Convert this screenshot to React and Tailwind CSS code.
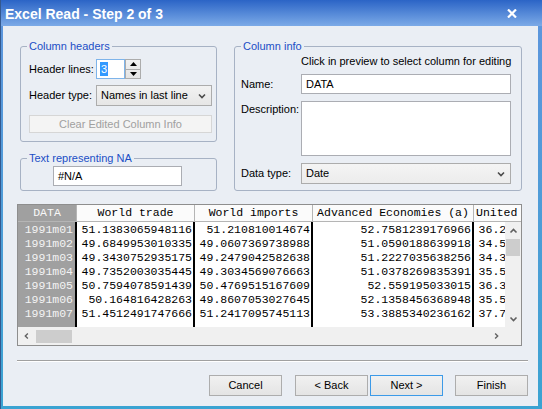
import React from "react";

const rows = [
  ["1991m01", "51.1383065948116", "51.210810014674", "52.7581239176966", "36.2146873021595"],
  ["1991m02", "49.6849953010335", "49.0607369738988", "51.0590188639918", "34.5912036618744"],
  ["1991m03", "49.3430752935175", "49.2479042582638", "51.2227035638256", "34.3307118430962"],
  ["1991m04", "49.7352003035445", "49.3034569076663", "51.0378269835391", "35.5146720913508"],
  ["1991m05", "50.7594078591439", "50.4769515167609", "52.559195033015", "36.3021845591173"],
  ["1991m06", "50.164816428263", "49.8607053027645", "52.1358456368948", "35.5887402716330"],
  ["1991m07", "51.4512491747666", "51.2417095745113", "53.3885340236162", "37.7165029384417"],
];

const columns = [
  { title: "World trade", width: "w-[118px]", align: "text-center" },
  { title: "World imports", width: "w-[118px]", align: "text-center" },
  { title: "Advanced Economies (a)", width: "w-[161px]", align: "text-center" },
  { title: "United States", width: "w-[118px]", align: "text-left pl-[2px]" },
];

function Chevron({ dir = "down", className = "" }) {
  const paths = {
    down: "M1 1.5 L4 4.5 L7 1.5",
    up: "M1 4.5 L4 1.5 L7 4.5",
    left: "M4.5 1 L1.5 4 L4.5 7",
    right: "M2.5 1 L5.5 4 L2.5 7",
  };
  const box = dir === "up" || dir === "down" ? "0 0 8 6" : "0 0 7 8";
  return (
    <svg
      viewBox={box}
      className={className}
      fill="none"
      stroke="currentColor"
      strokeWidth="1.6"
    >
      <path d={paths[dir]} />
    </svg>
  );
}

function Select({ value, className = "" }) {
  return (
    <div
      className={`flex items-center justify-between h-[21px] pl-[4px] pr-[5px] border border-[#acacac] bg-gradient-to-b from-[#f2f2f2] to-[#e6e6e6] ${className}`}
    >
      <span>{value}</span>
      <Chevron dir="down" className="w-[8px] h-[6px] text-[#4a4a4a]" />
    </div>
  );
}

// fieldset keeps no padding so the legend sits at a fixed offset from the border
function GroupBox({ title, className = "", bodyClass = "", children }) {
  return (
    <fieldset className={`border border-[#a7b2c4] rounded-[3px] ${className}`}>
      <legend className="ml-[6px] px-[2px] leading-[14px] text-[#1c4fc6]">
        {title}
      </legend>
      <div className={bodyClass}>{children}</div>
    </fieldset>
  );
}

function Button({ children, primary }) {
  return (
    <button
      className={`w-[73px] h-[21px] border bg-gradient-to-b from-[#f1f1f1] to-[#e4e4e4] ${
        primary ? "border-[#3c9ae8]" : "border-[#adadad]"
      }`}
    >
      {children}
    </button>
  );
}

export default function App() {
  return (
    <div className="w-[542px] h-[409px] flex flex-col overflow-hidden bg-gradient-to-b from-[#5e95dd] to-[#3aa3d2] border-l border-[#34598f] font-['Liberation_Sans',sans-serif] text-[11px] text-black select-none">
      {/* title bar */}
      <div className="h-[26px] shrink-0 flex items-center justify-between pl-[4px] pr-[25px] bg-gradient-to-b from-[#2b64c6] to-[#7caae7] text-white">
        <span className="font-bold text-[14px] leading-none pt-[1px]">
          Excel Read - Step 2 of 3
        </span>
        <svg viewBox="0 0 10 9" className="w-[10px] h-[9px]" stroke="white" strokeWidth="2.2">
          <path d="M1 0.5 L9 8.5 M9 0.5 L1 8.5" />
        </svg>
      </div>

      {/* client area */}
      <div className="flex-1 min-h-0 ml-[2px] mr-[4px] mb-[3px] bg-[#eaeef4] flex flex-col pl-[14px] pt-[13px]">
        <div className="flex items-start gap-[17px] ml-[3px]">
          {/* left column */}
          <div className="w-[197px] flex flex-col">
            <GroupBox title="Column headers" bodyClass="pl-[8px] pr-[4px] pb-[8px]">
              <div className="flex items-center h-[20px] mt-[6px]">
                <span className="w-[67px]">Header lines:</span>
                <div className="flex h-[20px]">
                  <div className="w-[29px] border border-[#7eb4ea] bg-white flex items-center pl-[3px]">
                    <span className="bg-[#3399ff] text-white leading-[14px] px-[1px]">3</span>
                  </div>
                  <div className="w-[16px] flex flex-col border border-[#acacac] bg-gradient-to-b from-[#f2f2f2] to-[#e4e4e4]">
                    <div className="flex-1 flex items-center justify-center border-b border-[#acacac]">
                      <svg viewBox="0 0 7 4" className="w-[7px] h-[4px]"><path d="M0 4 L3.5 0 L7 4 Z" fill="black" /></svg>
                    </div>
                    <div className="flex-1 flex items-center justify-center">
                      <svg viewBox="0 0 7 4" className="w-[7px] h-[4px]"><path d="M0 0 L3.5 4 L7 0 Z" fill="black" /></svg>
                    </div>
                  </div>
                </div>
              </div>
              <div className="flex items-center mt-[6px]">
                <span className="w-[67px]">Header type:</span>
                <Select value="Names in last line" className="w-[116px]" />
              </div>
              <button className="mt-[9px] w-full h-[18px] border border-[#d6d6d6] bg-[#f4f4f4] text-[#a0a0a0]">
                Clear Edited Column Info
              </button>
            </GroupBox>

            <GroupBox title="Text representing NA" className="mt-[9px]" bodyClass="pl-[32px] pb-[4px]">
              <div className="mt-[1px] w-[129px] h-[20px] border border-[#abadb3] bg-white flex items-center pl-[4px]">
                #N/A
              </div>
            </GroupBox>
          </div>

          {/* right column */}
          <GroupBox title="Column info" className="w-[288px]" bodyClass="pl-[6px] pr-[10px] pb-[6px]">
            <div className="pl-[60px] mt-[1px] leading-[14px] whitespace-nowrap">
              Click in preview to select column for editing
            </div>
            <div className="flex items-center mt-[6px]">
              <span className="w-[60px]">Name:</span>
              <div className="w-[210px] h-[20px] border border-[#abadb3] bg-white flex items-center pl-[4px]">
                DATA
              </div>
            </div>
            <div className="flex items-start mt-[7px]">
              <span className="w-[60px] leading-[14px] pt-[1px]">Description:</span>
              <div className="w-[210px] h-[55px] border border-[#abadb3] bg-white" />
            </div>
            <div className="flex items-center mt-[7px]">
              <span className="w-[60px]">Data type:</span>
              <Select value="Date" className="w-[210px] from-[#f4f4f4] to-[#ececec]" />
            </div>
          </GroupBox>
        </div>

        {/* preview grid */}
        <div className="mt-[13px] w-[505px] h-[142px] shrink-0 border border-[#8e8e8e] bg-white flex flex-col overflow-hidden font-['Liberation_Mono',monospace] text-[11.5px]">
          <div className="flex h-[17px] shrink-0 border-b border-[#b5b5b5] bg-[#fbfbfb] leading-[16px] whitespace-nowrap overflow-hidden">
            <div className="w-[59px] shrink-0 bg-[#a0a0a0] text-[#f8f8f8] text-center border-r border-[#b5b5b5]">
              DATA
            </div>
            {columns.map((c) => (
              <div
                key={c.title}
                className={`${c.width} shrink-0 ${c.align} border-r border-[#b5b5b5]`}
              >
                {c.title}
              </div>
            ))}
          </div>

          <div className="flex flex-1 min-h-0">
            <div className="flex-1 flex overflow-hidden whitespace-nowrap leading-[14px]">
              <div className="w-[59px] shrink-0 bg-[#a0a0a0] border-r-2 border-black text-[#f4f4f4] text-right pr-[2px] pt-[1px]">
                {rows.map((r) => (
                  <div key={r[0]} className="h-[14px]">{r[0]}</div>
                ))}
              </div>
              {columns.map((c, ci) => (
                <div
                  key={c.title}
                  className={`${c.width} shrink-0 border-r-2 border-black text-right pr-[1px] pt-[1px]`}
                >
                  {rows.map((r) => (
                    <div key={r[0]} className="h-[14px]">{r[ci + 1]}</div>
                  ))}
                </div>
              ))}
            </div>
            {/* vertical scrollbar */}
            <div className="w-[16px] shrink-0 bg-[#f0f0f0] flex flex-col items-center">
              <div className="h-[17px] flex items-center justify-center">
                <Chevron dir="up" className="w-[9px] h-[6px] text-[#606060]" />
              </div>
              <div className="w-[14px] h-[17px] bg-[#cdcdcd]" />
              <div className="flex-1" />
              <div className="h-[17px] flex items-center justify-center">
                <Chevron dir="down" className="w-[9px] h-[6px] text-[#606060]" />
              </div>
            </div>
          </div>

          {/* horizontal scrollbar */}
          <div className="h-[18px] shrink-0 flex">
            <div className="flex-1 bg-[#f0f0f0] flex items-center">
              <div className="w-[18px] flex justify-center">
                <Chevron dir="left" className="w-[6px] h-[8px] text-[#606060]" />
              </div>
              <div className="w-[36px] h-[13px] bg-[#cdcdcd]" />
              <div className="flex-1" />
              <div className="w-[18px] flex justify-center">
                <Chevron dir="right" className="w-[6px] h-[8px] text-[#606060]" />
              </div>
            </div>
            <div className="w-[16px] bg-[#f0f0f0]" />
          </div>
        </div>

        {/* etched separator */}
        <div className="mt-[14px] mr-[10px] border-t border-[#a0a0a0] border-b border-b-white" />

        {/* wizard buttons */}
        <div className="mt-[13px] mr-[10px] flex justify-end">
          <Button>Cancel</Button>
          <div className="w-[13px]" />
          <Button>&lt; Back</Button>
          <div className="w-[2px]" />
          <Button primary>Next &gt;</Button>
          <div className="w-[12px]" />
          <Button>Finish</Button>
        </div>
      </div>
    </div>
  );
}
